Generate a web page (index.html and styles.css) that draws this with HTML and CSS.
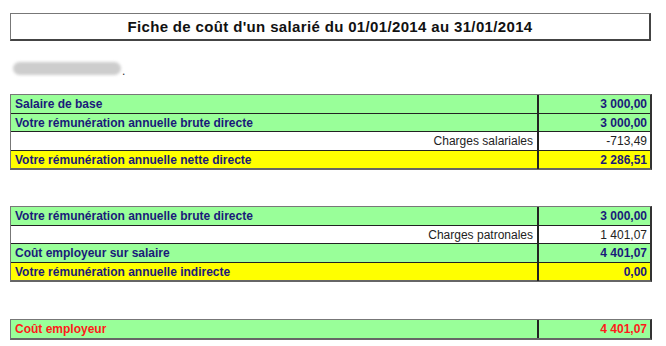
FILE: index.html
```html
<!DOCTYPE html>
<html lang="fr">
<head>
<meta charset="utf-8">
<title>Fiche de coût</title>
<link rel="stylesheet" href="styles.css">
</head>
<body>
<div class="page">
  <div class="title">Fiche de coût d'un salarié du 01/01/2014 au 31/01/2014</div>
  <div class="name"><span class="blur"></span><span class="dot">.</span></div>

  <div class="sheet first">
    <div class="row green"><div class="lab">Salaire de base</div><div class="val">3 000,00</div></div>
    <div class="row green"><div class="lab">Votre rémunération annuelle brute directe</div><div class="val">3 000,00</div></div>
    <div class="row white"><div class="lab right">Charges salariales</div><div class="val">-713,49</div></div>
    <div class="row yellow"><div class="lab">Votre rémunération annuelle nette directe</div><div class="val">2 286,51</div></div>
  </div>

  <div class="sheet second">
    <div class="row green"><div class="lab">Votre rémunération annuelle brute directe</div><div class="val">3 000,00</div></div>
    <div class="row white"><div class="lab right">Charges patronales</div><div class="val">1 401,07</div></div>
    <div class="row green"><div class="lab">Coût employeur sur salaire</div><div class="val">4 401,07</div></div>
    <div class="row yellow"><div class="lab">Votre rémunération annuelle indirecte</div><div class="val">0,00</div></div>
  </div>

  <div class="sheet third">
    <div class="row green red"><div class="lab">Coût employeur</div><div class="val">4 401,07</div></div>
  </div>
</div>
</body>
</html>
```
FILE: styles.css
```css
html, body {
  margin: 0;
  padding: 0;
  background: #ffffff;
}
body {
  font-family: "Liberation Sans", Arial, sans-serif;
  width: 666px;
  height: 346px;
  overflow: hidden;
}
.page {
  padding: 13px 0 0 10px;
}
.title {
  width: 638px;
  height: 25px;
  border: 1px solid #777;
  border-right: 2px solid #444;
  border-bottom: 2px solid #444;
  font-weight: bold;
  font-size: 15px;
  letter-spacing: 0.35px;
  line-height: 25px;
  text-align: center;
  color: #111;
}
.name {
  margin-top: 20px;
  margin-left: 3px;
  height: 16px;
  display: flex;
  align-items: flex-end;
}
.blur {
  display: inline-block;
  width: 108px;
  height: 13px;
  background: #cdcdcd;
  border-radius: 7px;
  filter: blur(1.5px);
  margin-bottom: 2px;
}
.dot {
  font-size: 12px;
  line-height: 12px;
  color: #333;
  margin-left: 1px;
}
.sheet {
  width: 639px;
  border-top: 1px solid #777;
  border-left: 1px solid #777;
  border-right: 2px solid #333;
  border-bottom: 2px solid #666;
}
.first { margin-top: 17px; }
.second { margin-top: 36px; }
.third { margin-top: 37px; }
.row {
  display: grid;
  grid-template-columns: 1fr 111px;
  height: 17.5px;
  border-top: 1px solid #222;
  font-size: 12px;
  line-height: 18px;
}
.row:first-child { border-top: none; }
.lab {
  padding-left: 4px;
  border-right: 2px solid #222;
  white-space: nowrap;
}
.val {
  text-align: right;
  padding-right: 3px;
}
.green { background: #99ff99; color: #1a1a7a; font-weight: bold; }
.yellow { background: #ffff00; color: #1a1a7a; font-weight: bold; }
.white { background: #ffffff; color: #222; font-weight: normal; }
.lab.right { text-align: right; padding-right: 4px; }
.red { color: #ff1a1a; }
```
